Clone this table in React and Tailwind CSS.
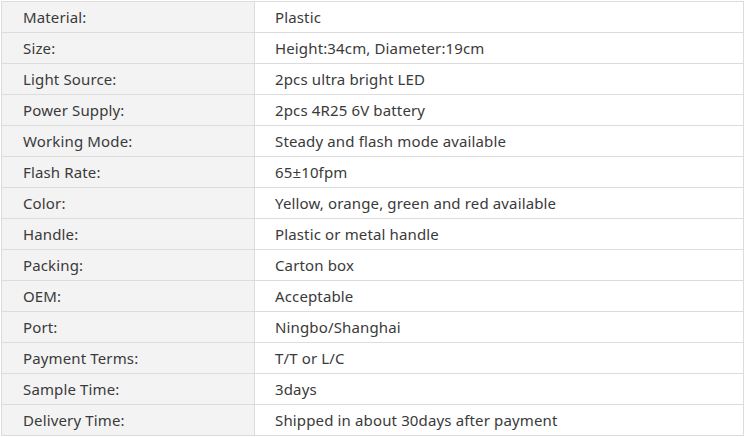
import React from 'react';

const specs = [
  ['Material:', 'Plastic'],
  ['Size:', 'Height:34cm, Diameter:19cm'],
  ['Light Source:', '2pcs ultra bright LED'],
  ['Power Supply:', '2pcs 4R25 6V battery'],
  ['Working Mode:', 'Steady and flash mode available'],
  ['Flash Rate:', '65±10fpm'],
  ['Color:', 'Yellow, orange, green and red available'],
  ['Handle:', 'Plastic or metal handle'],
  ['Packing:', 'Carton box'],
  ['OEM:', 'Acceptable'],
  ['Port:', 'Ningbo/Shanghai'],
  ['Payment Terms:', 'T/T or L/C'],
  ['Sample Time:', '3days'],
  ['Delivery Time:', 'Shipped in about 30days after payment'],
];

export default function App() {
  return (
    <div className="w-[746px] h-[437px] bg-white pt-px pl-px">
      <table
        className="w-[743px] border-collapse text-[15px] tracking-[0.14px] text-[#3a3a3a]"
        style={{ fontFamily: '"Noto Sans", "Open Sans", sans-serif' }}
      >
        <tbody>
          {specs.map(([label, value]) => (
            <tr key={label} className="h-[31px]">
              <td className="w-[253px] border border-[#dcdcdc] bg-[#f3f3f3] pl-[21px] pt-px pb-0 leading-[29px]">
                {label}
              </td>
              <td className="border border-[#dcdcdc] bg-white pl-[20px] pt-px pb-0 leading-[29px]">
                {value}
              </td>
            </tr>
          ))}
        </tbody>
      </table>
    </div>
  );
}
